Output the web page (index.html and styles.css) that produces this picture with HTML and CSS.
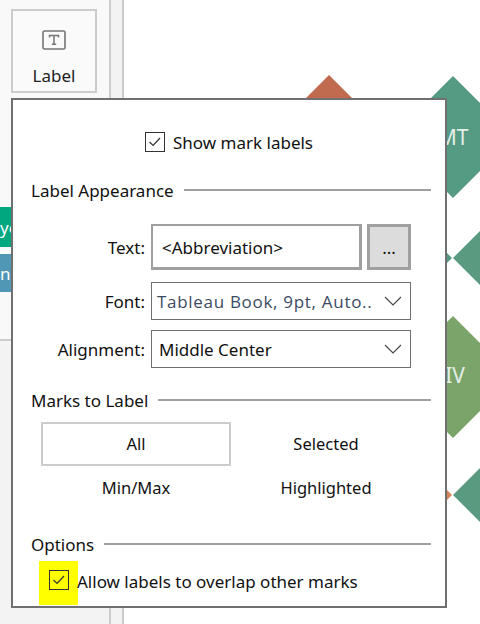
FILE: index.html
```html
<!DOCTYPE html>
<html lang="en">
<head>
<meta charset="utf-8">
<title>Label marks</title>
<link rel="stylesheet" href="styles.css">
</head>
<body>
<div class="page">
  <aside class="sidebar">
    <div class="upper">
      <div class="mark-card">
        <svg class="t-icon" width="24" height="20" viewBox="0 0 24 20"><rect x="1" y="1" width="22" height="18" rx="1.5" fill="none" stroke="#767676" stroke-width="1.6"/><path d="M7.5 7.5V5.6h9v1.9M12 5.6v8.6M9.8 14.2h4.4" fill="none" stroke="#767676" stroke-width="1.5"/></svg>
        <span>Label</span>
      </div>
      <div class="pill pill-green">yo</div>
      <div class="pill pill-blue">n</div>
    </div>
    <div class="lower"></div>
  </aside>
  <div class="strip"></div>
  <main class="canvas">
    <svg class="viz" width="356" height="624" viewBox="124 0 356 624">
      <polygon fill="#c06b50" points="329,75 390,136 329,197 268,136"/>
      <polygon fill="#559a82" points="453,76 514,137 453,198 392,137"/>
      <polygon fill="#559a82" points="391,197 452,258 391,319 330,258"/>
      <polygon fill="#5a9a80" points="514,197 575,258 514,319 453,258"/>
      <polygon fill="#7aa469" points="453,316 514,377 453,438 392,377"/>
      <polygon fill="#d5845a" points="391,434 452,495 391,556 330,495"/>
      <polygon fill="#5a9a80" points="514,434 575,495 514,556 453,495"/>
      <text class="viz-label" x="453" y="145" text-anchor="middle">MT</text>
      <text class="viz-label" x="455" y="383" text-anchor="middle">IV</text>
    </svg>
  </main>
  <section class="popup">
    <label class="show-row">
      <span class="check"><svg width="18" height="18" viewBox="0 0 18 18"><path d="M3.5 9l3.6 3.4L14 5" fill="none" stroke="#333" stroke-width="1.2"/></svg></span>
      <span>Show mark labels</span>
    </label>
    <h2 class="heading heading-first"><span>Label Appearance</span></h2>
    <div class="form">
      <div class="field field-text">
        <span class="field-name">Text:</span>
        <div class="text-input">&lt;Abbreviation&gt;</div>
        <div class="more">...</div>
      </div>
      <div class="field field-font">
        <span class="field-name">Font:</span>
        <div class="select select-font"><span>Tableau Book, 9pt, Auto..</span><svg width="18" height="10" viewBox="0 0 18 10"><path d="M1 1l8 8 8-8" fill="none" stroke="#444" stroke-width="1.1"/></svg></div>
      </div>
      <div class="field field-align">
        <span class="field-name">Alignment:</span>
        <div class="select"><span>Middle Center</span><svg width="18" height="10" viewBox="0 0 18 10"><path d="M1 1l8 8 8-8" fill="none" stroke="#444" stroke-width="1.1"/></svg></div>
      </div>
    </div>
    <h2 class="heading heading-marks"><span>Marks to Label</span></h2>
    <div class="choices">
      <div class="choice choice-on">All</div>
      <div class="choice">Selected</div>
      <div class="choice">Min/Max</div>
      <div class="choice">Highlighted</div>
    </div>
    <h2 class="heading heading-options"><span>Options</span></h2>
    <label class="overlap-row">
      <span class="marker"><span class="check check-small"><svg width="18" height="18" viewBox="0 0 18 18"><path d="M3.5 9l3.6 3.4L14 5" fill="none" stroke="#333" stroke-width="1.2"/></svg></span></span>
      <span class="overlap-text">Allow labels to overlap other marks</span>
    </label>
  </section>
</div>
</body>
</html>
```

FILE: styles.css
```css
* { box-sizing: border-box; }
html, body { margin: 0; padding: 0; }
body { background: #fff; color: #111; font-family: "Noto Sans", "Liberation Sans", sans-serif; font-size: 17px; }
.page { position: relative; display: flex; width: 480px; height: 624px; overflow: hidden; }

.sidebar { width: 112px; display: flex; flex-direction: column; border-right: 2px solid #ccc; background: #f3f3f3; }
.upper { height: 341px; background: #f9f9f9; border-bottom: 2px solid #ccc; padding: 9px 0 0; }
.lower { flex: 1; }
.mark-card { width: 86px; height: 84px; margin-left: 11px; border: 2px solid #ccc; background: #fafafa; display: flex; flex-direction: column; align-items: center; padding-top: 19px; gap: 15px; color: #222; }
.mark-card span { line-height: 22px; }
.pill { height: 40px; color: #fff; display: flex; align-items: center; padding-left: 0; }
.pill-green { background: #00a77f; margin-top: 114px; }
.pill-blue { background: #4f97b5; margin-top: 7px; height: 38px; }

.strip { width: 13px; background: #f3f3f3; border-right: 2px solid #ccc; }
.canvas { flex: 1; background: #fff; }
.viz { display: block; }
.viz-label { fill: #e4efe9; font-size: 21px; font-family: "Noto Sans", sans-serif; }

.popup { position: absolute; left: 11px; top: 98px; width: 436px; height: 510px; background: #fff; border: 2px solid #707070; padding: 0 14px 0 18px; }
.show-row { display: flex; align-items: center; justify-content: center; gap: 8px; margin-top: 32px; height: 20px; padding-right: 4px; }
.check { width: 20px; height: 20px; border: 1px solid #333; display: flex; align-items: center; justify-content: center; flex: none; }

.heading { display: flex; align-items: center; gap: 10px; margin: 0; font: inherit; height: 22px; }
.heading::after { content: ""; flex: 1; height: 2px; background: #a0a0a0; }
.heading-first { margin-top: 27px; }
.heading-marks { margin-top: 21px; }
.heading-options { margin-top: 23px; }

.form { display: flex; flex-direction: column; margin-top: 23px; }
.field { display: flex; align-items: center; }
.field-name { width: 132px; padding-right: 6px; text-align: right; flex: none; margin-left: -12px; }
.field-text { height: 46px; }
.field-font, .field-align { height: 38px; margin-top: 10px; }
.field-font { margin-top: 12px; }
.text-input { width: 211px; height: 46px; border: 3px solid #a0a0a0; border-top-width: 2px; border-left-width: 2px; padding: 2px 0 0 9px; display: flex; align-items: center; }
.more { width: 44px; height: 46px; margin-left: 5px; background: #dcdcdc; border: 3px solid #a0a0a0; display: flex; align-items: center; justify-content: center; }
.select { width: 260px; height: 38px; border: 1px solid #707070; padding: 0 8px 0 7px; display: flex; align-items: center; justify-content: space-between; }
.select-font { color: #3b4a63; font-family: "Open Sans", sans-serif; font-size: 17px; letter-spacing: .7px; padding-left: 5px; }

.choices { display: grid; grid-template-columns: 190px 190px; grid-auto-rows: 44px; margin: 11px 0 0 10px; }
.choice { display: flex; align-items: center; justify-content: center; padding-bottom: 1px; font-size: 16.5px; }
.choice-on { border: 2px solid #ccc; }

.overlap-row { display: flex; align-items: center; margin-top: 6px; height: 44px; margin-left: 8px; }
.marker { width: 39px; height: 44px; padding-bottom: 6px; background: #ffff00; display: flex; align-items: center; justify-content: center; margin-right: -1px; flex: none; }
.overlap-text { margin-bottom: 4px; }
```
